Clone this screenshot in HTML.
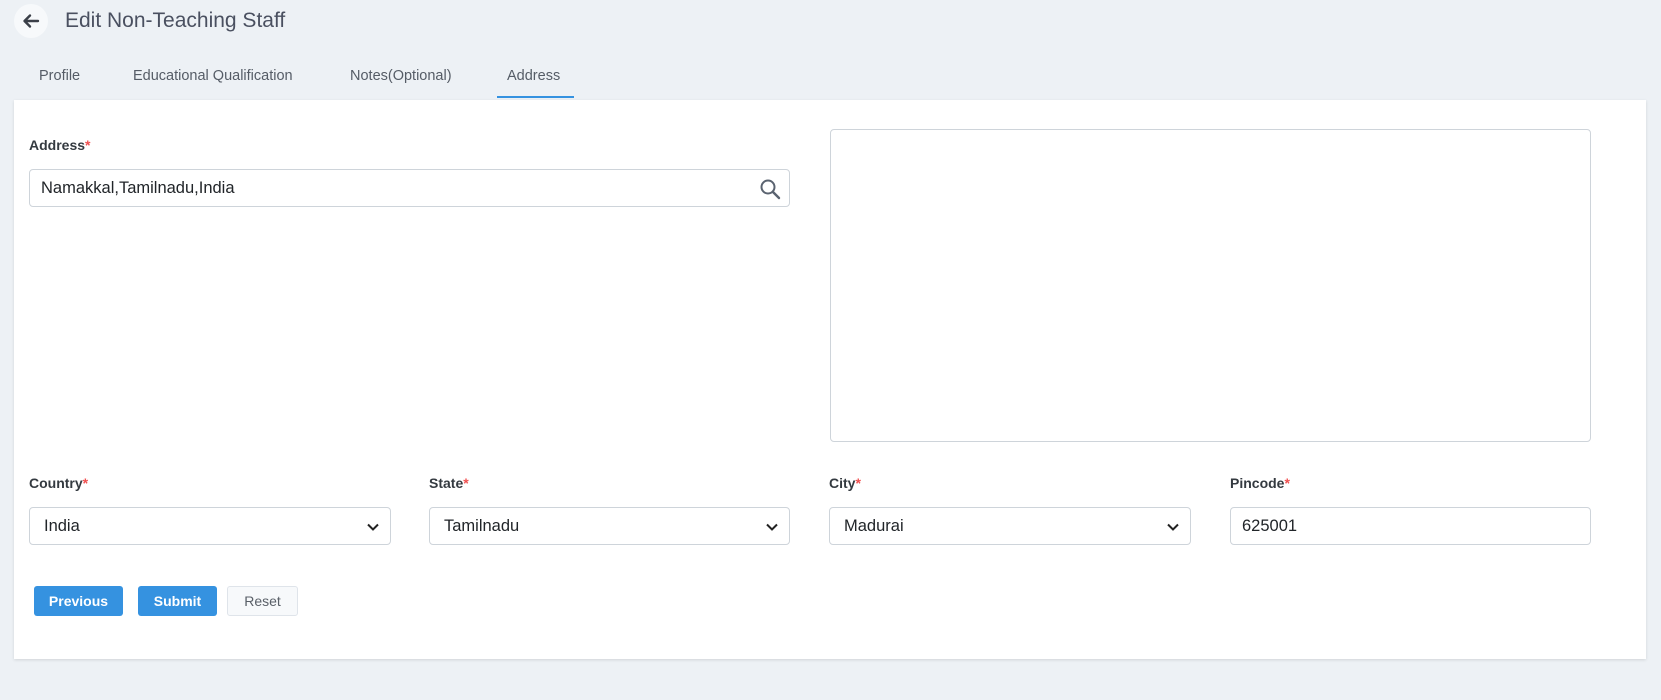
<!DOCTYPE html>
<html><head><style>
*{box-sizing:border-box;margin:0;padding:0}
body{width:1661px;height:700px;background:#edf1f5;font-family:"Liberation Sans",sans-serif;position:relative;overflow:hidden;color:#343a40}
.abs{position:absolute}
.back{left:14px;top:4px;width:34px;height:34px;border-radius:50%;background:#f7f9fb}
h1{position:absolute;left:65px;top:9px;font-size:21px;font-weight:normal;color:#4a5060}
.tab{position:absolute;top:68px;font-size:14.5px;color:#555c66}
.card{left:14px;top:100px;width:1632px;height:559px;background:#fff;box-shadow:0 1px 3px rgba(0,0,0,.12)}
.lbl{position:absolute;font-size:14px;font-weight:bold;color:#343a40}
.lbl span{color:#f05050}
.inp{position:absolute;height:38px;border:1px solid #ced4da;border-radius:4px;background:#fff;font-size:16.5px;color:#212529;padding-left:14px;line-height:36px}
.inp.t{padding-left:11px}
.chev{position:absolute;right:10px;top:12px}
.btn{position:absolute;top:586px;height:30px;border-radius:3px;font-size:14px;font-weight:bold;color:#fff;background:#3592e0;text-align:center;line-height:30px}
</style></head><body>
<div class="abs back"><svg width="34" height="34" viewBox="0 0 34 34"><path d="M24 17H11M16 11.5L10.5 17 16 22.5" stroke="#3a3f48" stroke-width="2.4" fill="none" stroke-linecap="round" stroke-linejoin="round"/></svg></div>
<h1>Edit Non-Teaching Staff</h1>
<div class="tab" style="left:39px">Profile</div>
<div class="tab" style="left:133px">Educational Qualification</div>
<div class="tab" style="left:350px">Notes(Optional)</div>
<div class="tab" style="left:507px">Address</div>
<div class="abs" style="left:497px;top:96px;width:77px;height:2px;background:#3592e0"></div>
<div class="abs card"></div>
<div class="lbl" style="left:29px;top:137px">Address<span>*</span></div>
<div class="inp t" style="left:29px;top:169px;width:761px">Namakkal,Tamilnadu,India
<svg class="abs" style="right:8px;top:8px" width="22" height="22" viewBox="0 0 22 22"><circle cx="9" cy="9" r="6.5" stroke="#5a6370" stroke-width="2" fill="none"/><path d="M14 14l6 6" stroke="#5a6370" stroke-width="2.4" stroke-linecap="round"/></svg></div>
<div class="abs" style="left:830px;top:129px;width:761px;height:313px;border:1px solid #ced4da;border-radius:4px"></div>
<div class="lbl" style="left:29px;top:475px">Country<span>*</span></div>
<div class="lbl" style="left:429px;top:475px">State<span>*</span></div>
<div class="lbl" style="left:829px;top:475px">City<span>*</span></div>
<div class="lbl" style="left:1230px;top:475px">Pincode<span>*</span></div>
<div class="inp" style="left:29px;top:507px;width:362px">India<svg class="chev" width="14" height="14" viewBox="0 0 14 14"><path d="M2 4.5l5 5 5-5" stroke="#222" stroke-width="2" fill="none"/></svg></div>
<div class="inp" style="left:429px;top:507px;width:361px">Tamilnadu<svg class="chev" width="14" height="14" viewBox="0 0 14 14"><path d="M2 4.5l5 5 5-5" stroke="#222" stroke-width="2" fill="none"/></svg></div>
<div class="inp" style="left:829px;top:507px;width:362px">Madurai<svg class="chev" width="14" height="14" viewBox="0 0 14 14"><path d="M2 4.5l5 5 5-5" stroke="#222" stroke-width="2" fill="none"/></svg></div>
<div class="inp t" style="left:1230px;top:507px;width:361px">625001</div>
<div class="btn" style="left:34px;width:89px">Previous</div>
<div class="btn" style="left:138px;width:79px">Submit</div>
<div class="btn" style="left:227px;width:71px;background:#f7f9fb;color:#5a6068;border:1px solid #dfe4ea;font-weight:normal;line-height:28px">Reset</div>
</body></html>
